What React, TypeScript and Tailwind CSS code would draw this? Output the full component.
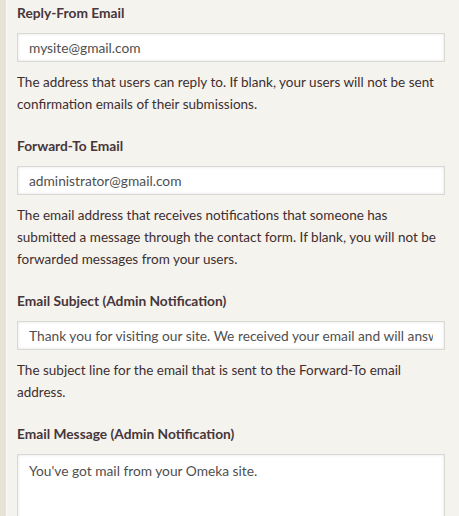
import React from 'react';

interface Field {
  label: string;
  value: string;
  help: string;
}

const fields: Field[] = [
  {
    label: 'Reply-From Email',
    value: 'mysite@gmail.com',
    help: 'The address that users can reply to. If blank, your users will not be sent confirmation emails of their submissions.',
  },
  {
    label: 'Forward-To Email',
    value: 'administrator@gmail.com',
    help: 'The email address that receives notifications that someone has submitted a message through the contact form. If blank, you will not be forwarded messages from your users.',
  },
  {
    label: 'Email Subject (Admin Notification)',
    value: 'Thank you for visiting our site. We received your email and will answer you as soon as possible.',
    help: 'The subject line for the email that is sent to the Forward-To email address.',
  },
];

const inputCls =
  'block w-full h-[29px] px-[11px] bg-white border border-[#d9d8d4] shadow-[inset_0_0_3px_rgba(0,0,0,0.12)] text-[13.75px] text-[#4f4f4f] outline-none';

const App: React.FC = () => {
  return (
    <div className="flex min-h-[516px] w-full bg-[#f4f3ee] font-['Lato','Open_Sans',sans-serif]">
      {/* left rail */}
      <div className="w-[7px] flex-shrink-0 bg-[#e6e2d5] border-r border-[#f9f8f4]"></div>

      <div className="flex-1 pl-[10px] pr-[14px] pt-[3px]">
        {fields.map((f) => (
          <div key={f.label} className="mb-[21px]">
            <label className="block text-[13.75px] leading-[20px] font-bold text-[#47363a]">{f.label}</label>
            <input readOnly value={f.value} className={`${inputCls} mt-[10px]`} />
            <p className="mt-[9px] text-[13.5px] leading-[22px] text-[#3e2e30]">{f.help}</p>
          </div>
        ))}

        <div>
          <label className="block text-[13.75px] leading-[20px] font-bold text-[#47363a]">
            Email Message (Admin Notification)
          </label>
          <textarea
            readOnly
            value="You've got mail from your Omeka site."
            rows={5}
            className="mt-[10px] block w-full h-[110px] px-[11px] py-[6px] bg-white border border-[#d9d8d4] shadow-[inset_0_0_3px_rgba(0,0,0,0.12)] text-[13.75px] leading-[20px] text-[#4f4f4f] outline-none resize-none"
          />
        </div>
      </div>
    </div>
  );
};

export default App;
